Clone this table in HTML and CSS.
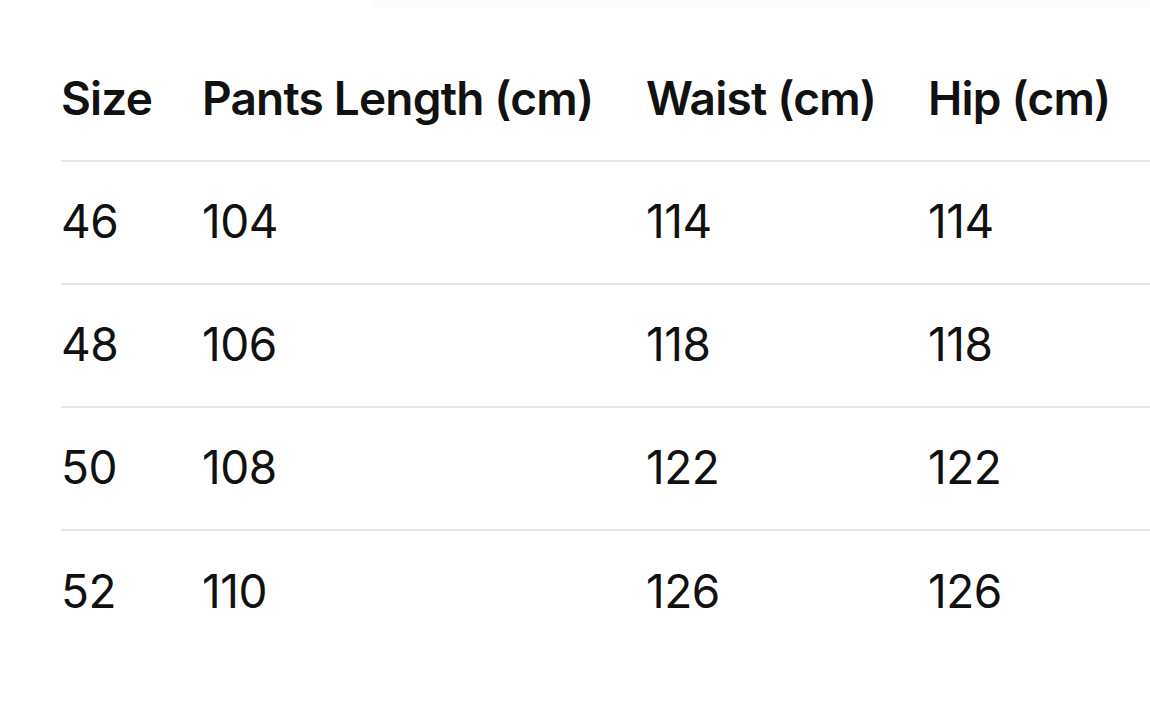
FILE: index.html
```html
<!DOCTYPE html>
<html>
<head>
<meta charset="utf-8">
<link rel="stylesheet" href="styles.css">
</head>
<body>
<div class="topstrip"></div>
<div class="wrap">
  <div class="table">
    <div class="row head">
      <div class="cell c1">Size</div>
      <div class="cell c2">Pants Length (cm)</div>
      <div class="cell c3">Waist (cm)</div>
      <div class="cell c4">Hip (cm)</div>
    </div>
    <div class="row">
      <div class="cell c1">46</div>
      <div class="cell c2">104</div>
      <div class="cell c3">114</div>
      <div class="cell c4">114</div>
    </div>
    <div class="row">
      <div class="cell c1">48</div>
      <div class="cell c2">106</div>
      <div class="cell c3">118</div>
      <div class="cell c4">118</div>
    </div>
    <div class="row">
      <div class="cell c1">50</div>
      <div class="cell c2">108</div>
      <div class="cell c3">122</div>
      <div class="cell c4">122</div>
    </div>
    <div class="row last">
      <div class="cell c1">52</div>
      <div class="cell c2">110</div>
      <div class="cell c3">126</div>
      <div class="cell c4">126</div>
    </div>
  </div>
</div>
</body>
</html>
```
FILE: styles.css
```css
html, body {
  margin: 0;
  padding: 0;
  background: #ffffff;
  width: 1150px;
  height: 702px;
  overflow: hidden;
}
body {
  font-family: Inter, "Noto Sans", "Liberation Sans", sans-serif;
  color: #111111;
  position: relative;
}
.topstrip {
  position: absolute;
  left: 370px;
  top: 0;
  width: 780px;
  height: 7px;
  background: #fcfcfc;
}
.wrap {
  padding: 39px 0 0 61px;
}
.table {
  display: flex;
  flex-direction: column;
  width: 1089px;
}
.row {
  display: grid;
  grid-template-columns: 141px 444px 282px 1fr;
  align-items: center;
  box-sizing: border-box;
  height: 123px;
  padding-bottom: 4px;
  border-bottom: 2px solid #e6e6e6;
  font-size: 46px;
  font-weight: 400;
  letter-spacing: -0.5px;
}
.row.last {
  border-bottom: none;
}
.row.head {
  font-weight: 600;
  letter-spacing: -0.8px;
}
.cell {
  white-space: nowrap;
}
```
